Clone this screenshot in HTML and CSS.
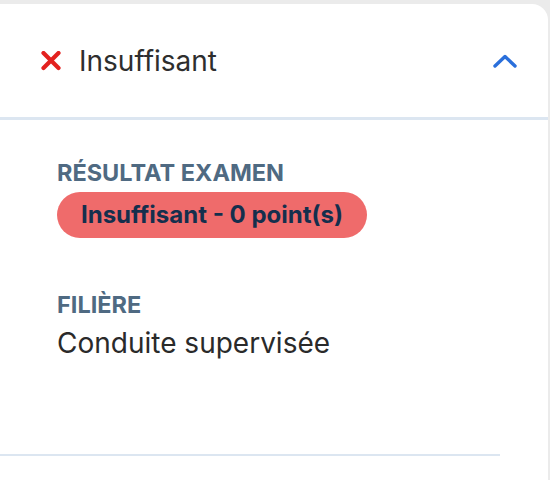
FILE: index.html
```html
<!DOCTYPE html>
<html lang="fr">
<head>
<meta charset="utf-8">
<link rel="stylesheet" href="styles.css">
</head>
<body>
<div class="card">
  <div class="header">
    <div class="title">
      <svg class="x-icon" width="22" height="20" viewBox="0 0 22 20"><path d="M3.5 2 L18.5 17 M18.5 2 L3.5 17" stroke="#e3211f" stroke-width="4.2" stroke-linecap="round"/></svg>
      <span>Insuffisant</span>
    </div>
    <svg class="chevron" width="24" height="14" viewBox="0 0 24 14"><path d="M2 12 L12 2.5 L22 12" fill="none" stroke="#2a6fdb" stroke-width="3.4" stroke-linecap="round" stroke-linejoin="round"/></svg>
  </div>
  <div class="content">
    <div class="field">
      <div class="label">Résultat examen</div>
      <div class="badge">Insuffisant - 0 point(s)</div>
    </div>
    <div class="field second">
      <div class="label">Filière</div>
      <div class="value">Conduite supervisée</div>
    </div>
    <div class="divider"></div>
  </div>
</div>
</body>
</html>
```
FILE: styles.css
```css
html, body {
  margin: 0;
  padding: 0;
  background: #ebebeb;
  font-family: Inter, "Noto Sans", sans-serif;
  height: 480px;
  overflow: hidden;
}
.card {
  margin-top: 4px;
  width: 548px;
  height: 500px;
  background: #ffffff;
  border-top-right-radius: 16px;
}
.header {
  height: 116px;
  box-sizing: border-box;
  display: flex;
  align-items: center;
  justify-content: space-between;
  padding: 0 31px 0 40px;
  border-bottom: 3px solid #dce6f1;
}
.title {
  display: flex;
  align-items: center;
  gap: 17px;
  font-size: 28px;
  color: #2e2e2e;
}
.chevron { display: block; }
.x-icon { display: block; }
.content {
  padding: 39px 0 0 57px;
}
.label {
  font-size: 23.5px;
  font-weight: 700;
  text-transform: uppercase;
  color: #4f6a82;
  line-height: 28px;
}
.badge {
  display: inline-block;
  margin-top: 5px;
  background: #ef6b6b;
  color: #142f4d;
  font-weight: 700;
  font-size: 24px;
  line-height: 46px;
  padding: 0 24px;
  border-radius: 23px;
}
.second {
  margin-top: 53px;
}
.value {
  margin-top: 7px;
  font-size: 28px;
  line-height: 34px;
  color: #2a2a2a;
}
.divider {
  margin-top: 94px;
  margin-left: -57px;
  width: 500px;
  height: 2px;
  background: #dce6f1;
}
```
